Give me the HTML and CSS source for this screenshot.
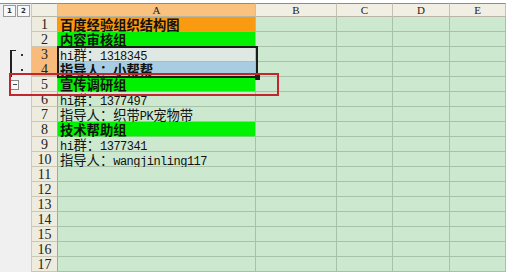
FILE: index.html
```html
<!DOCTYPE html>
<html lang="zh-CN">
<head>
    <meta charset="UTF-8">
    <title>百度经验组织结构图</title>
    <link rel="stylesheet" href="styles.css">
</head>
<body>
    <div class="wrap">
        <div class="sheet">
            <!-- cabeçalho -->
            <div class="ol hdol"><span class="lvl">1</span><span class="lvl">2</span></div>
            <div class="hd corner"></div>
            <div class="hd sel">A</div>
            <div class="hd">B</div>
            <div class="hd">C</div>
            <div class="hd">D</div>
            <div class="hd">E</div>

            <div class="ol"></div><div class="rh">1</div>
            <div class="c a orange b">百度经验组织结构图</div><div class="c"></div><div class="c"></div><div class="c"></div><div class="c"></div>

            <div class="ol"></div><div class="rh">2</div>
            <div class="c a green b">内容审核组</div><div class="c"></div><div class="c"></div><div class="c"></div><div class="c"></div>

            <div class="ol"><span class="brk top"></span><span class="dot"></span></div><div class="rh sel">3</div>
            <div class="c a active"><span class="en">hi</span>群：<span class="en">1318345</span></div><div class="c"></div><div class="c"></div><div class="c"></div><div class="c"></div>

            <div class="ol"><span class="brk"></span><span class="dot"></span></div><div class="rh sel">4</div>
            <div class="c a blue b">指导人：小帮帮</div><div class="c"></div><div class="c"></div><div class="c"></div><div class="c"></div>

            <div class="ol"><span class="minus"></span></div><div class="rh">5</div>
            <div class="c a green b">宣传调研组</div><div class="c"></div><div class="c"></div><div class="c"></div><div class="c"></div>

            <div class="ol"></div><div class="rh">6</div>
            <div class="c a"><span class="en">hi</span>群：<span class="en">1377497</span></div><div class="c"></div><div class="c"></div><div class="c"></div><div class="c"></div>

            <div class="ol"></div><div class="rh">7</div>
            <div class="c a">指导人：织带<span class="en">PK</span>宠物带</div><div class="c"></div><div class="c"></div><div class="c"></div><div class="c"></div>

            <div class="ol"></div><div class="rh">8</div>
            <div class="c a green b">技术帮助组</div><div class="c"></div><div class="c"></div><div class="c"></div><div class="c"></div>

            <div class="ol"></div><div class="rh">9</div>
            <div class="c a"><span class="en">hi</span>群：<span class="en">1377341</span></div><div class="c"></div><div class="c"></div><div class="c"></div><div class="c"></div>

            <div class="ol"></div><div class="rh">10</div>
            <div class="c a">指导人：<span class="en">wangjinling117</span></div><div class="c"></div><div class="c"></div><div class="c"></div><div class="c"></div>

            <div class="ol"></div><div class="rh">11</div>
            <div class="c a"></div><div class="c"></div><div class="c"></div><div class="c"></div><div class="c"></div>

            <div class="ol"></div><div class="rh">12</div>
            <div class="c a"></div><div class="c"></div><div class="c"></div><div class="c"></div><div class="c"></div>

            <div class="ol"></div><div class="rh">13</div>
            <div class="c a"></div><div class="c"></div><div class="c"></div><div class="c"></div><div class="c"></div>

            <div class="ol"></div><div class="rh">14</div>
            <div class="c a"></div><div class="c"></div><div class="c"></div><div class="c"></div><div class="c"></div>

            <div class="ol"></div><div class="rh">15</div>
            <div class="c a"></div><div class="c"></div><div class="c"></div><div class="c"></div><div class="c"></div>

            <div class="ol"></div><div class="rh">16</div>
            <div class="c a"></div><div class="c"></div><div class="c"></div><div class="c"></div><div class="c"></div>

            <div class="ol"></div><div class="rh">17</div>
            <div class="c a"></div><div class="c"></div><div class="c"></div><div class="c"></div><div class="c"></div>
        </div>

        <!-- seleção A3:A4 e destaque vermelho -->
        <div class="selbox"><span class="handle"></span></div>
        <div class="redbox"></div>
    </div>
</body>
</html>
```

FILE: styles.css
```css
body{
    margin: 0px;
    padding: 0px;
    background-color: white;
}
.wrap{
    position: relative;
    padding-top: 3px;
}
.sheet{
    display: grid;
    grid-template-columns: 32px 26px 198px 81px 56px 57px 56px;
    grid-template-rows: 14px;
    grid-auto-rows: 15px;
    width: 506px;
    font-family: "Noto Sans CJK SC", sans-serif;
}
.ol{
    background-color: #f0f0f0;
    border-right: 1px solid #c9c9c9;
    display: flex;
    align-items: center;
    position: relative;
}
.hdol{
    border-top: 1px solid #8c8c8c;
    gap: 1px;
    padding-left: 3px;
}
.lvl{
    width: 11px;
    height: 10px;
    border: 1px solid #9a9a9a;
    background-color: #f8f8f8;
    font-family: "DejaVu Sans", sans-serif;
    font-size: 7px;
    font-weight: bold;
    line-height: 10px;
    text-align: center;
    color: #333;
}
.hd{
    background-color: #f1efe4;
    border-top: 1px solid #8c8c8c;
    border-right: 1px solid #c6c2b2;
    border-bottom: 1px solid #b9b5a5;
    font-family: "Liberation Serif", serif;
    font-size: 11px;
    line-height: 13px;
    text-align: center;
    color: #222;
}
.hd.sel{
    background-color: #f9c27f;
}
.rh{
    background-color: #eeebdf;
    border-right: 1px solid #a9a593;
    border-bottom: 1px solid #cbc7b6;
    font-family: "Liberation Serif", serif;
    font-size: 14px;
    line-height: 15px;
    text-align: center;
    color: #222;
}
.rh.sel{
    background-color: #f8bb7c;
}
.c{
    background-color: #cce8cf;
    border-right: 1px solid #a8c2aa;
    border-bottom: 1px solid #a8c2aa;
}
.a{
    padding-left: 2px;
    font-size: 13.3px;
    line-height: 15px;
    color: #111;
    white-space: nowrap;
}
.b{
    font-weight: bold;
}
.en{
    font-family: "Liberation Mono", monospace;
    font-size: 12px;
    letter-spacing: -0.5px;
}
.orange{
    background-color: #f99a10;
    border-bottom-color: #d9a060;
}
.green{
    background-color: #00f200;
    border-bottom-color: #6ed86e;
}
.active{
    background-color: #dfe8e3;
}
.blue{
    background-color: #a8cde2;
}
/* barra de agrupamento */
.brk{
    position: absolute;
    left: 10px;
    top: 0px;
    width: 4px;
    height: 15px;
    border-left: 2px solid #222;
}
.brk.top{
    top: 3px;
    height: 12px;
    border-top: 1px solid #222;
}
.dot{
    width: 2px;
    height: 2px;
    margin-left: 21px;
    background-color: #333;
}
.minus{
    width: 7px;
    height: 8px;
    margin-left: 10px;
    border: 1px solid #888;
    background: linear-gradient(#444, #444) center / 4px 1px no-repeat, #fafafa;
}
.selbox{
    position: absolute;
    left: 57px;
    top: 46px;
    width: 197px;
    height: 28px;
    border: 2px solid #1c1c1c;
}
.handle{
    position: absolute;
    right: -4px;
    bottom: -4px;
    width: 5px;
    height: 5px;
    background-color: #1c1c1c;
}
.redbox{
    position: absolute;
    left: 9px;
    top: 73px;
    width: 266px;
    height: 19px;
    border: 2px solid #c1272d;
}
```
